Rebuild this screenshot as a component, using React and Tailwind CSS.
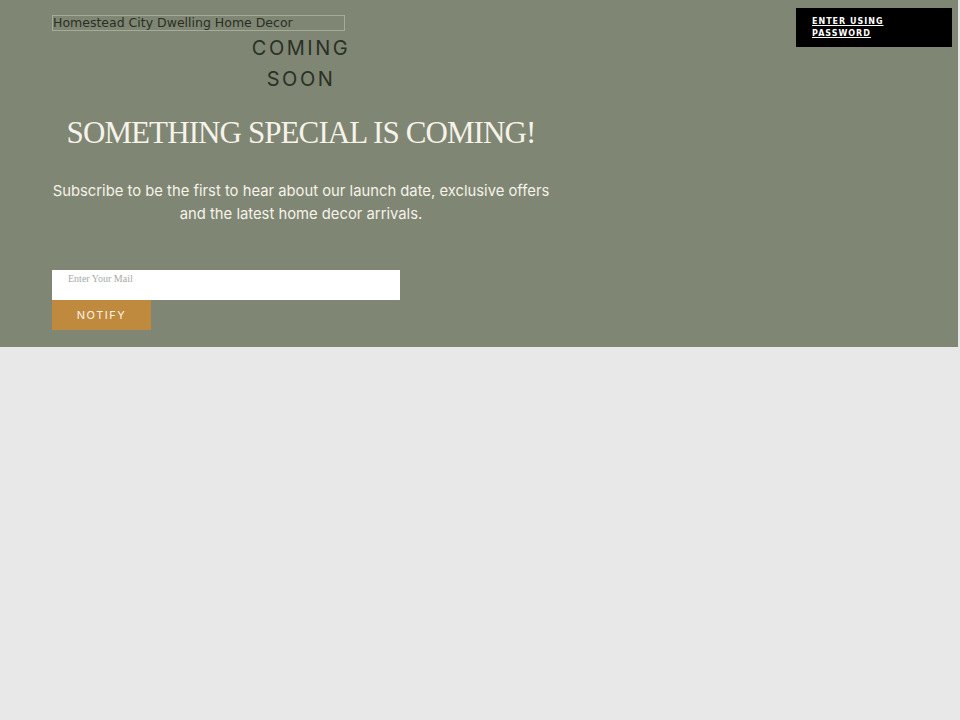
export default function App() {
  return (
    <div className="min-h-[720px] w-[960px] bg-[#e8e8e8]">
      <div className="relative h-[347px] w-[958px] bg-[#7f8673]">
        <div className="flex w-[550px] flex-col pl-[52px]">
          <div className="mt-[15px] h-[16px] w-[293px] whitespace-nowrap border border-[#a4ab98] font-['DejaVu_Sans',sans-serif] text-[12.5px] leading-[14px] text-[#2a2f25]">
            Homestead City Dwelling Home Decor
          </div>
          <div className="mt-[2px] text-center font-['Inter',sans-serif] text-[20px] leading-[31px] tracking-[2.5px] text-[#2b3026]">
            <div>COMING</div>
            <div>SOON</div>
          </div>
          <div className="mt-[18px] whitespace-nowrap text-center font-['Liberation_Serif',serif] text-[31px] leading-[40px] tracking-[-0.9px] text-[#f6f3ea]">
            SOMETHING SPECIAL IS COMING!
          </div>
          <div className="mt-[27px] whitespace-nowrap text-center font-['Inter',sans-serif] text-[14.8px] leading-[23px] text-[#f6f3ea]">
            Subscribe to be the first to hear about our launch date, exclusive offers
            <br />
            and the latest home decor arrivals.
          </div>
          <div className="mt-[44px] flex h-[30px] w-[348px] items-start bg-white pl-[16px] pt-[1px] font-['Liberation_Serif',serif] text-[10px] text-[#a8a8a8]">
            Enter Your Mail
          </div>
          <div className="flex h-[30px] w-[99px] items-center justify-center bg-[#c08a3e] font-['Inter',sans-serif] text-[11px] tracking-[1.5px] text-[#fbf3e4]">
            NOTIFY
          </div>
        </div>
        <div className="absolute left-[796px] top-[8px] h-[39px] w-[156px] bg-black pl-[16px] pt-[8px] font-['DejaVu_Sans',sans-serif] text-[8px] font-bold leading-[12px] tracking-[1px] text-white underline">
          ENTER USING
          <br />
          PASSWORD
        </div>
      </div>
    </div>
  );
}
